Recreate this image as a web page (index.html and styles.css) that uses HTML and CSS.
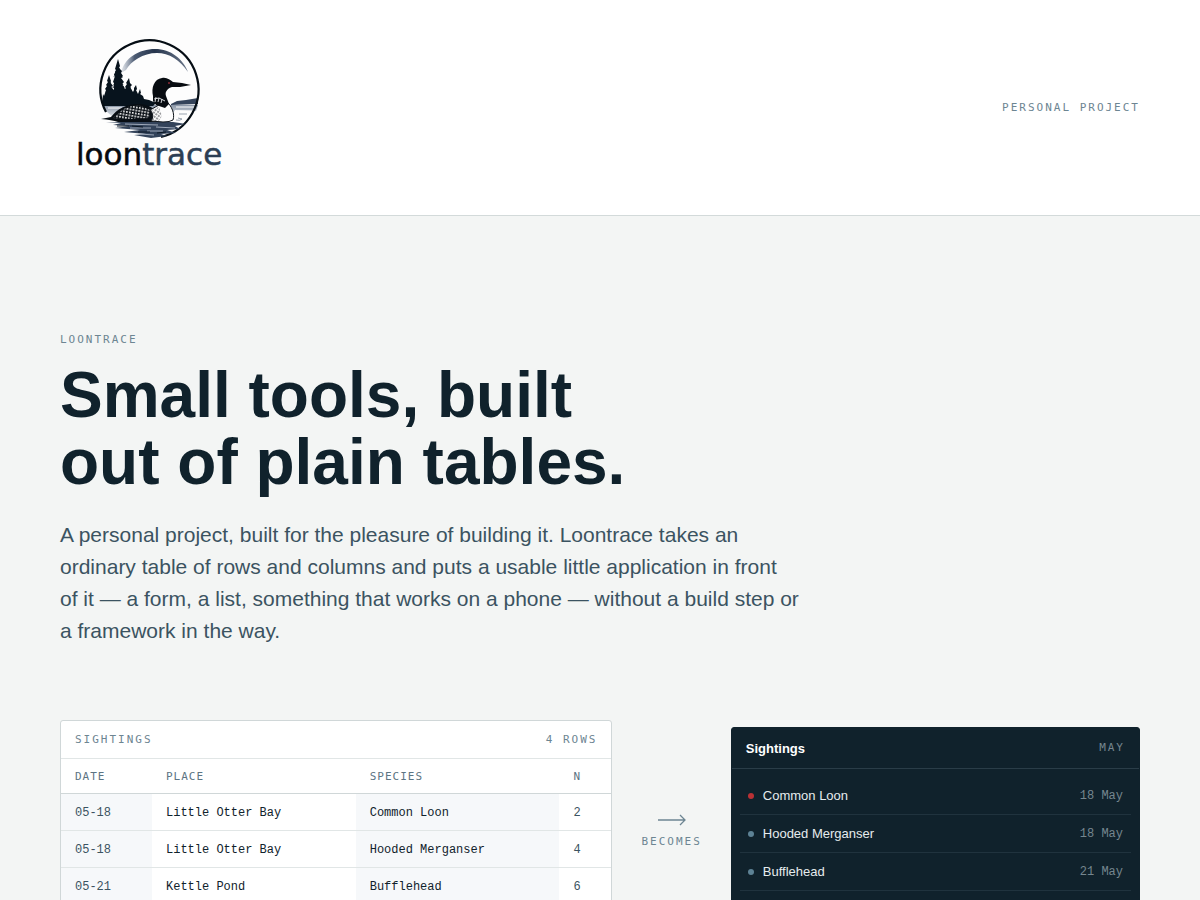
FILE: index.html
```html
<!DOCTYPE html>
<html lang="en">
<head>
    <meta charset="UTF-8">
    <meta name="viewport" content="width=device-width, initial-scale=1.0">
    <title>Loontrace</title>
    <link rel="stylesheet" href="styles.css">
</head>
<body>
    <header class="site-header">
        <a class="logo" href="#" aria-label="Loontrace home">
            <svg viewBox="0 0 180 176" width="180" height="176">
                <defs>
                    <linearGradient id="moon" x1="0" y1="0" x2="1" y2="0">
                        <stop offset="0" stop-color="#8794a8" stop-opacity="0.2"/>
                        <stop offset="0.2" stop-color="#4c5b73"/>
                        <stop offset="0.5" stop-color="#26354d"/>
                        <stop offset="1" stop-color="#6a7689"/>
                    </linearGradient>
                    <linearGradient id="water" x1="0" y1="0" x2="0" y2="1">
                        <stop offset="0" stop-color="#8995a6"/>
                        <stop offset="1" stop-color="#eef1f4"/>
                    </linearGradient>
                    <pattern id="checks" width="3" height="3" patternUnits="userSpaceOnUse" patternTransform="rotate(10)">
                        <rect x="0" y="0" width="1.7" height="1.7" fill="#f4f4f4"/>
                    </pattern>
                    <pattern id="dots" width="3" height="3" patternUnits="userSpaceOnUse" patternTransform="rotate(35)">
                        <circle cx="1" cy="1" r="0.8" fill="#15191e"/>
                    </pattern>
                </defs>
                <!-- moon -->
                <path d="M61 53C64 38 79 29 95 29C111 29 123 39 128 52C120 40 109 33 97 33C83 33 71 41 66 50Z" fill="url(#moon)"/>
                <!-- far shore and lake -->
                <path d="M111 84L117 81L126 80L132 79L138 78L138 84L111 85Z" fill="#34435a"/>
                <path d="M43 85H138L136 91L115 90L110 98L55 99L46 91Z" fill="url(#water)"/>
                <path d="M48 88H62M116 87H134M118 91H133M116 95H128" stroke="#fdfdfd" stroke-width="1"/>
                <path d="M116 100Q120 101 122 99L118 98M119 94H127" fill="none" stroke="#6d7b8d" stroke-width="0.7"/>
                <!-- pines -->
                <path d="M42 84L43 74L44 76L46 70L45 69L47 66L46 65L48 62L47 61L49 55L51 61L50 62L53 66L51 67L54 70L54 63L53 62L55 56L54 55L56 50L55 49L58 39L60 46L59 48L62 51L61 53L63 56L61 58L64 62L62 64L65 69L66 68L65 67L67 64L66 63L69 58L70 63L72 65L70 67L73 72L74 70L74 68L76 65L77 69L76 70L78 74L80 69L81 73L80 74L83 76L84 79L89 80L96 83L93 86L43 86Z" fill="#07131d"/>
                <path d="M49 61L46 73M50 61L52 73M58 45L54 57M58 45L62 58M57 55L53 68M59 55L64 68M68 63L65 75M69 63L72 75M76 69L73 77" stroke="#07131d" stroke-width="1" stroke-dasharray="2 1"/>
                <!-- ring, left open where the reflection starts -->
                <path d="M46 92A49 49 0 1 1 101 117" fill="none" stroke="#050d14" stroke-width="2.2"/>
                <!-- reflection -->
                <path d="M46 102H113L126 104L115 106L120 109L107 110L116 113L101 114L107 116L91 118L74 115L86 114L64 112L80 110L55 108L70 106L53 105L61 103Z" fill="#33435a"/>
                <path d="M65 104L98 105M70 108L91 108M96 107L115 108M87 111L103 111M80 114L94 115" stroke="#a0aaba" stroke-width="1"/>
                <path d="M57 106L69 106M72 106L83 107M78 112L90 112M97 113L106 112" stroke="#0b1724" stroke-width="1"/>
                <!-- loon -->
                <path d="M41 99L51 97C57 89 67 84 77 84C85 84 90 86 94 89L103 102L58 102Q52 100 41 99Z" fill="#080e14"/>
                <path d="M58 94C64 87 72 85 81 86L90 90L89 98L64 99L53 98Z" fill="url(#checks)"/>
                <path d="M90 90Q99 85 106 81C112 86 115 94 113 100Q110 102 103 102L91 101Q95 95 90 90Z" fill="#fdfdfd" stroke="#10161c" stroke-width="1"/>
                <path d="M92 89L99 87L102 96L98 102L90 101Q94 96 90 90Z" fill="url(#dots)"/>
                <path d="M93 76C91 68 94 59 102 58C107 57 110 60 113 62L122 63L131 65L120 67L112 67C106 69 105 73 106 76L109 84L105 88L96 85L93 81Z" fill="#080c11"/>
                <path d="M94 79L99 78L105 81M96 77L95 82M99 78L98 82M102 79L101 83" fill="none" stroke="#e7e9eb" stroke-width="0.9"/>
                <circle cx="109" cy="63" r="1" fill="#8c2835"/>
                <text class="logo-text" x="16" y="145">loon<tspan class="logo-trace">trace</tspan></text>
            </svg>
        </a>
        <span class="label">Personal project</span>
    </header>

    <main class="hero">
        <p class="label">Loontrace</p>
        <h1>Small tools, built<br>out of plain tables.</h1>
        <p class="intro">A personal project, built for the pleasure of building it. Loontrace takes an ordinary table of rows and columns and puts a usable little application in front of it — a form, a list, something that works on a phone — without a build step or a framework in the way.</p>

        <div class="demo">
            <section class="sheet">
                <div class="sheet-bar label">
                    <span>Sightings</span>
                    <span>4 rows</span>
                </div>
                <table>
                    <thead>
                        <tr><th class="col-date">Date</th><th>Place</th><th>Species</th><th class="col-n">N</th></tr>
                    </thead>
                    <tbody>
                        <tr><td>05-18</td><td>Little Otter Bay</td><td>Common Loon</td><td>2</td></tr>
                        <tr><td>05-18</td><td>Little Otter Bay</td><td>Hooded Merganser</td><td>4</td></tr>
                        <tr><td>05-21</td><td>Kettle Pond</td><td>Bufflehead</td><td>6</td></tr>
                        <tr><td>05-24</td><td>Kettle Pond</td><td>Common Loon</td><td>1</td></tr>
                    </tbody>
                </table>
            </section>

            <div class="becomes label">
                <svg viewBox="0 0 28 12" width="28" height="12" fill="none" stroke="currentColor">
                    <path d="M0 6H27M22 1L27 6L22 11" stroke-width="1.3"/>
                </svg>
                <span>Becomes</span>
            </div>

            <section class="app">
                <div class="app-bar">
                    <h2>Sightings</h2>
                    <span class="label">May</span>
                </div>
                <ul>
                    <li class="new"><span>Common Loon</span><time>18 May</time></li>
                    <li><span>Hooded Merganser</span><time>18 May</time></li>
                    <li><span>Bufflehead</span><time>21 May</time></li>
                    <li><span>Common Loon</span><time>24 May</time></li>
                </ul>
            </section>
        </div>
    </main>
</body>
</html>
```

FILE: styles.css
```css
*{
    margin: 0;
    padding: 0;
    box-sizing: border-box;
}
body{
    background-color: #f3f5f4;
    color: #10222c;
    font-family: "Liberation Sans", Arial, sans-serif;
}
.site-header{
    display: flex;
    justify-content: space-between;
    align-items: center;
    padding: 20px 60px 19px;
    background-color: #fff;
    border-bottom: 1px solid #d3dada;
}
.logo{
    display: block;
    background-color: #fdfdfd;
}
.logo svg{
    display: block;
}
.logo-text{
    font-family: "DejaVu Sans", sans-serif;
    font-size: 31px;
    fill: #060a0f;
    stroke: #060a0f;
    stroke-width: 0.5px;
}
.logo-trace{
    fill: #2c3e54;
    stroke: #2c3e54;
}
.label{
    font-family: "DejaVu Sans Mono", monospace;
    font-size: 11px;
    line-height: 16px;
    letter-spacing: 2px;
    text-transform: uppercase;
    color: #6d8592;
}
.hero{
    padding: 116px 60px 96px;
}
h1{
    margin-top: 14px;
    font-size: 64px;
    line-height: 67px;
    font-weight: 700;
}
.intro{
    max-width: 740px;
    margin: 23px 0 73px;
    font-size: 21px;
    line-height: 32px;
    color: #3b5361;
}
.demo{
    display: grid;
    grid-template-columns: 1.35fr auto 1fr;
    gap: 29px;
    align-items: center;
}

/* source table */
.sheet{
    background-color: #fff;
    border: 1px solid #d0d7d8;
    border-radius: 3px;
    overflow: hidden;
}
.sheet-bar{
    display: flex;
    justify-content: space-between;
    align-items: center;
    height: 38px;
    padding: 0 14px;
    border-bottom: 1px solid #e1e6e6;
}
table{
    width: 100%;
    table-layout: fixed;
    border-collapse: separate;
    border-spacing: 0;
    font-family: "Liberation Mono", monospace;
    font-size: 12px;
    text-align: left;
}
th{
    height: 35px;
    padding: 0 14px;
    border-bottom: 1px solid #d0d7d8;
    font-family: "DejaVu Sans Mono", monospace;
    font-size: 11px;
    font-weight: 400;
    letter-spacing: 1px;
    text-transform: uppercase;
    color: #5c7483;
}
.col-date{
    width: 91px;
}
.col-n{
    width: 52px;
}
td{
    height: 37px;
    padding: 2px 14px 0;
    border-bottom: 1px solid #e1e6e6;
}
td:nth-child(odd){
    background-color: #f6f8fa;
}
td:first-child,td:last-child{
    color: #3b5361;
}
tbody tr:last-child td{
    border-bottom: none;
}

.becomes{
    display: flex;
    flex-direction: column;
    align-items: center;
    gap: 8px;
}

/* finished app */
.app{
    background-color: #10222c;
    border: 1px solid #10222c;
    border-radius: 3px;
    color: #e6ecee;
}
.app-bar{
    display: flex;
    justify-content: space-between;
    align-items: center;
    height: 41px;
    padding: 0 14px;
    border-bottom: 1px solid #2a3d48;
}
.app h2{
    font-size: 13px;
    font-weight: 700;
    color: #fff;
}
.app ul{
    padding: 8px 8px 6px;
    list-style: none;
}
.app li{
    display: flex;
    align-items: center;
    gap: 9px;
    height: 38px;
    padding: 0 8px;
    border-bottom: 1px solid #20333e;
    font-size: 13px;
}
.app li:last-child{
    border-bottom: none;
}
.app li::before{
    content: "";
    width: 6px;
    height: 6px;
    border-radius: 50%;
    background-color: #5d8295;
}
.app li.new::before{
    background-color: #b93135;
}
.app time{
    margin-left: auto;
    font-family: "Liberation Mono", monospace;
    font-size: 12px;
    color: #75868f;
}
.app .label{
    color: #75868f;
}
```
